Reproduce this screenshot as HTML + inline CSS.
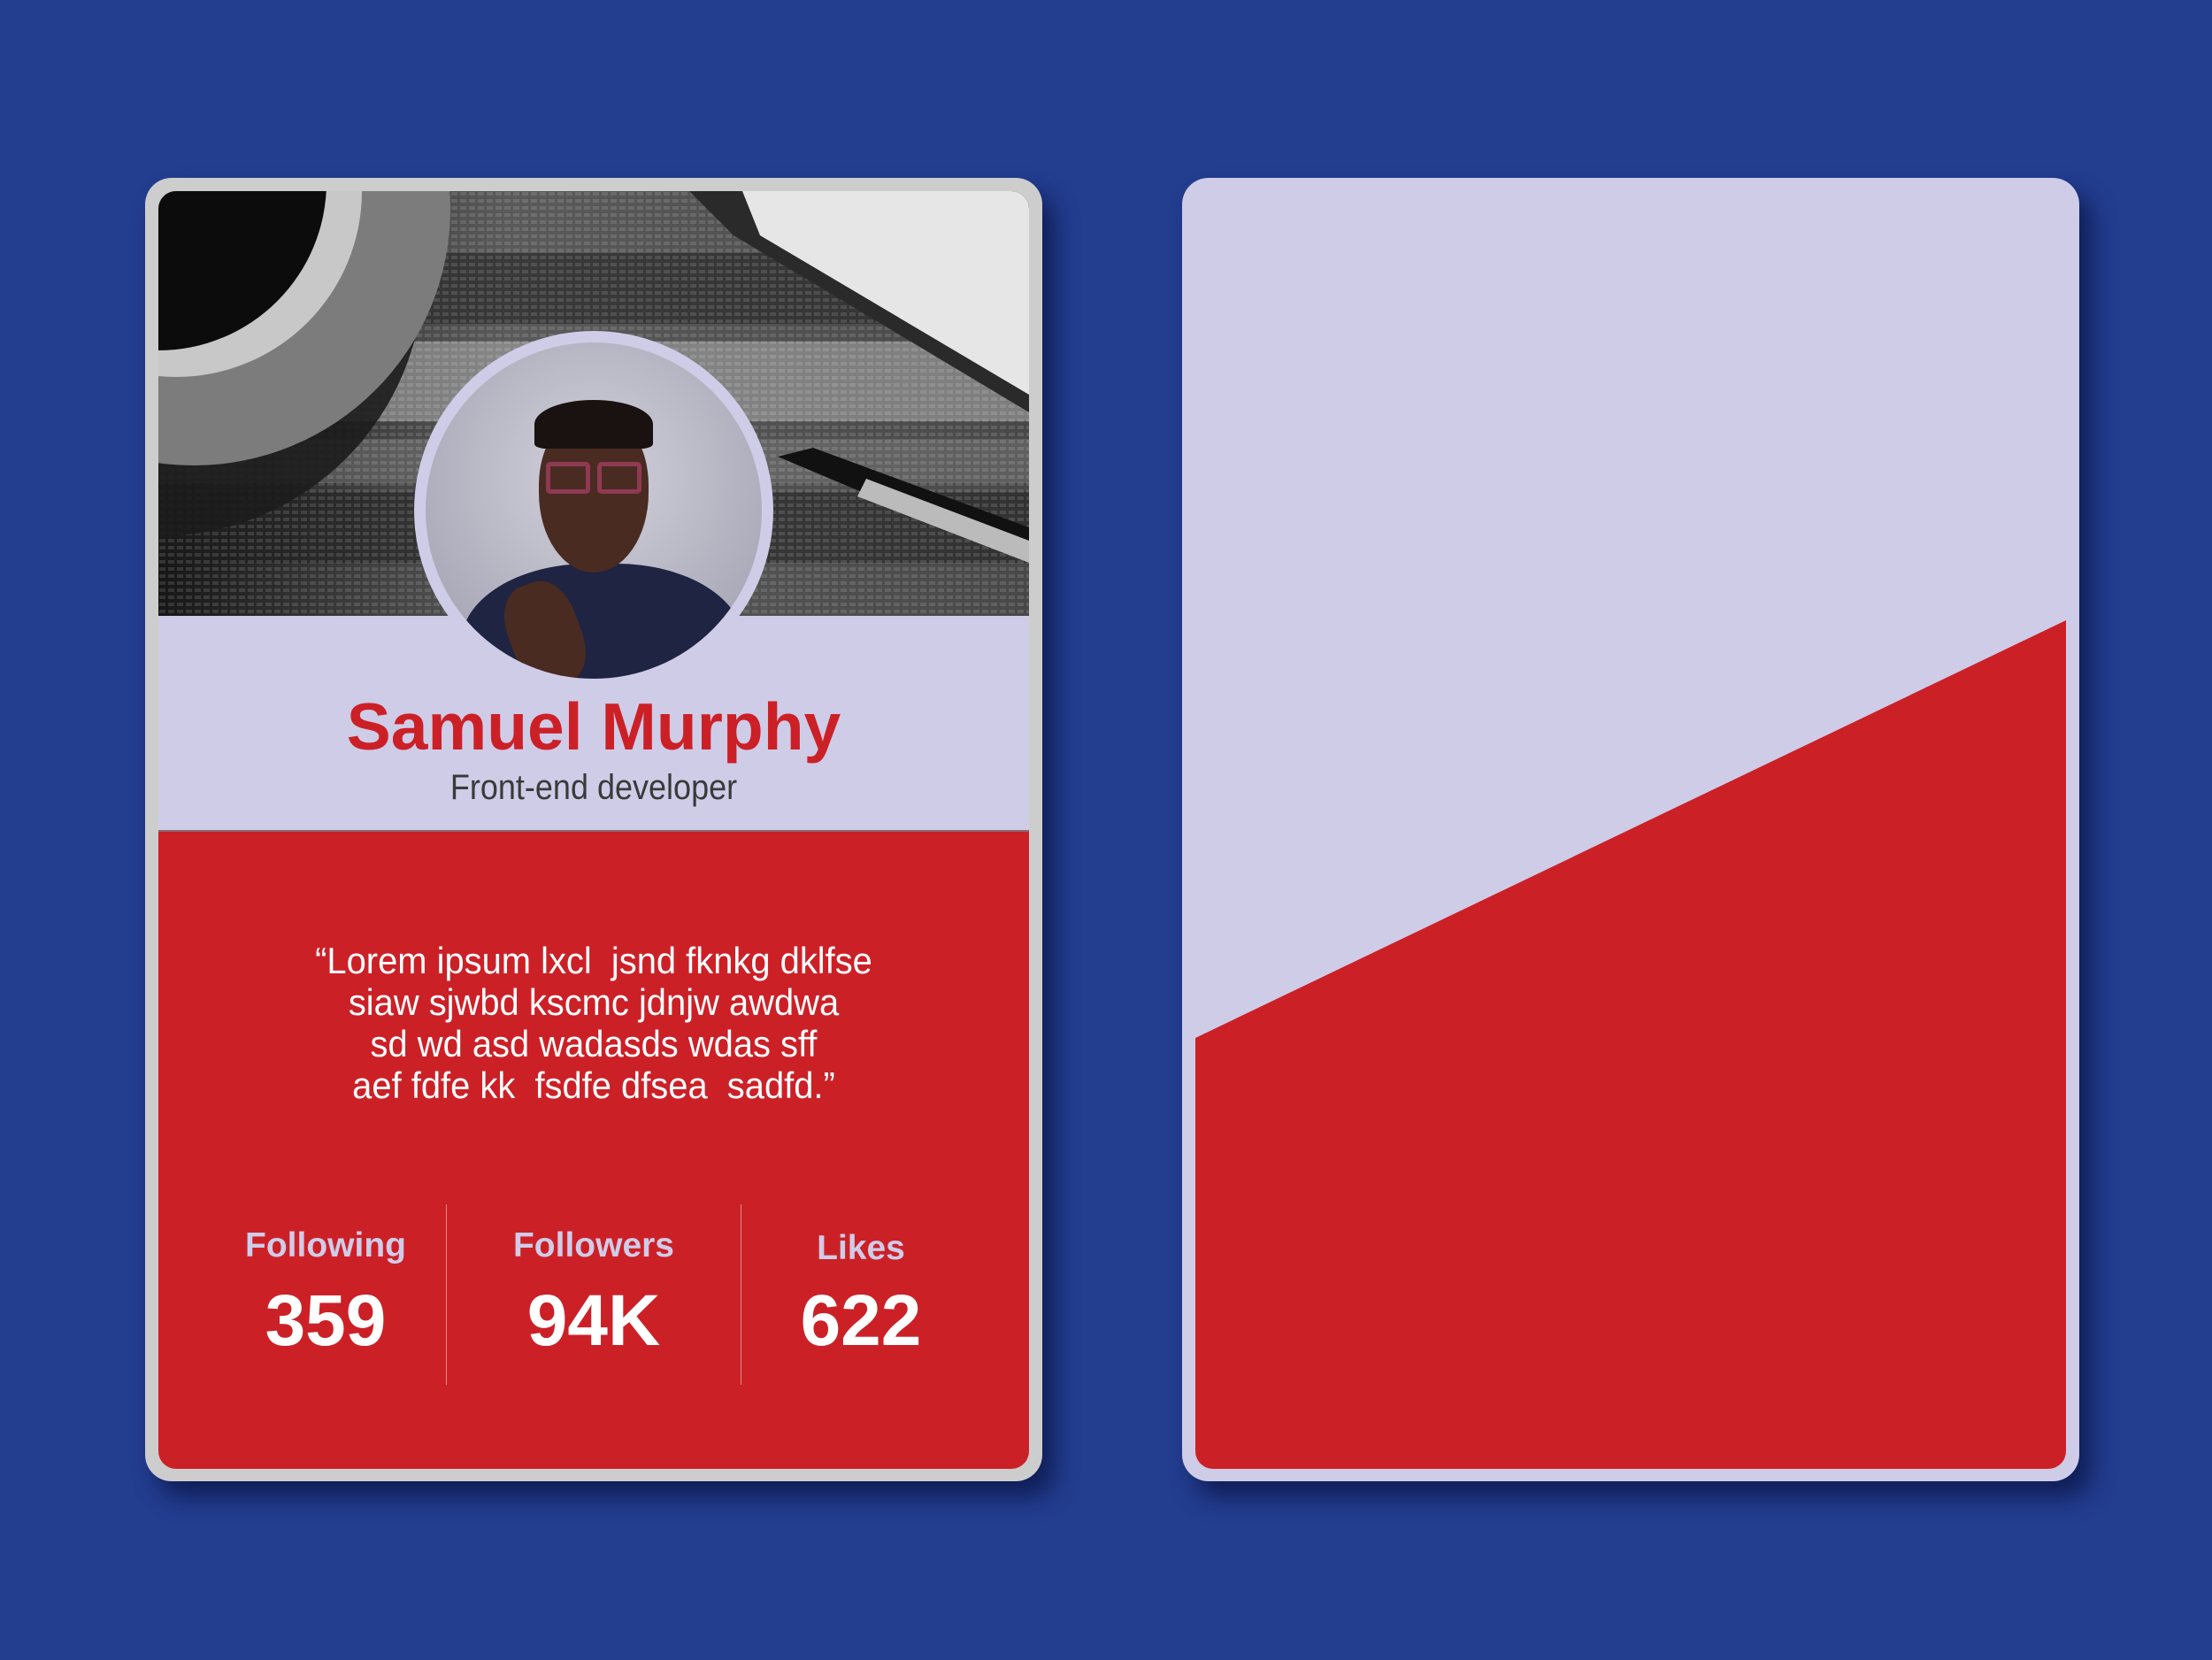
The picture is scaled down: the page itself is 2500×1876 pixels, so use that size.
<!DOCTYPE html>
<html><head><meta charset="utf-8"><style>
*{margin:0;padding:0;box-sizing:border-box}
body{width:2500px;height:1876px;background:#233d8f;position:relative;overflow:hidden;font-family:"Liberation Sans",sans-serif}
.card{position:absolute;top:201px;width:1014px;height:1473px;border-radius:30px;box-shadow:14px 18px 26px rgba(10,20,70,.75)}
#c1{left:164px;background:#cdcdcd}
#c2{left:1336px;background:#cfcce8}
.in{position:absolute;left:15px;top:15px;width:984px;height:1444px;border-radius:20px;overflow:hidden;background:#cfcce8}
.t{position:absolute;left:0;width:100%;text-align:center;white-space:nowrap}
</style></head><body>
<div class="card" id="c1"><div class="in">
<svg width="984" height="480" style="position:absolute;left:0;top:0">
<defs>
<pattern id="w" width="10" height="8" patternUnits="userSpaceOnUse"><rect width="10" height="8" fill="#000" opacity=".15"/><rect x="1" y="1" width="7" height="4" fill="#fff" opacity=".12"/></pattern>
<linearGradient id="bg" x1="0" y1="0" x2="1" y2="0"><stop offset="0" stop-color="#1a1a1a"/><stop offset=".4" stop-color="#6a6a6a"/><stop offset="1" stop-color="#555"/></linearGradient>
</defs>
<rect width="984" height="480" fill="url(#bg)"/>
<rect y="70" width="984" height="80" fill="#333" opacity=".7"/>
<rect y="170" width="984" height="90" fill="#c8c8c8" opacity=".55"/>
<rect y="280" width="984" height="50" fill="#999" opacity=".4"/>
<rect y="340" width="984" height="80" fill="#222" opacity=".5"/>
<rect width="984" height="480" fill="url(#w)"/>
<circle cx="0" cy="90" r="300" fill="#1c1c1c" opacity=".9"/>
<circle cx="40" cy="20" r="290" fill="#7c7c7c"/>
<circle cx="20" cy="0" r="210" fill="#c8c8c8"/>
<circle cx="0" cy="-10" r="190" fill="#0c0c0c"/>
<polygon points="600,0 984,0 984,250 650,50" fill="#2a2a2a"/>
<polygon points="660,0 984,0 984,230 680,50" fill="#e6e6e6"/>
<polygon points="700,300 740,290 984,380 984,420" fill="#111"/>
<polygon points="800,325 984,395 984,420 790,345" fill="#bbb"/>
</svg>
<div style="position:absolute;left:289px;top:158px;width:406px;height:406px;border-radius:50%;background:#cfcce8"></div>
<div style="position:absolute;left:302px;top:171px;width:380px;height:380px;border-radius:50%;overflow:hidden;background:radial-gradient(circle at 50% 40%,#d2d1dc,#9c9bab)">
<div style="position:absolute;left:40px;top:250px;width:320px;height:200px;border-radius:45% 45% 0 0;background:#1e2442"></div>
<div style="position:absolute;left:128px;top:80px;width:124px;height:180px;border-radius:45% 45% 50% 50%;background:#4a2b22"></div>
<div style="position:absolute;left:123px;top:65px;width:134px;height:55px;border-radius:50% 50% 10% 10%;background:#1a1210"></div>
<div style="position:absolute;left:136px;top:135px;width:50px;height:36px;border:5px solid #8e3a52;border-radius:5px"></div>
<div style="position:absolute;left:194px;top:135px;width:50px;height:36px;border:5px solid #8e3a52;border-radius:5px"></div>
<div style="position:absolute;left:95px;top:270px;width:80px;height:120px;border-radius:40%;background:#4a2b22;transform:rotate(-20deg)"></div>
</div>
<div class="t" style="top:562px;font-size:75px;font-weight:bold;color:#cc2027">Samuel Murphy</div>
<div class="t" style="top:652px;font-size:40px;color:#3a3a3a;transform:scaleX(.9)">Front-end developer</div>
<div style="position:absolute;left:0;top:722px;width:984px;height:722px;background:#cc2027;border-top:2px solid #8a6a70"></div>
<div class="t" style="top:846px;font-size:42px;line-height:47px;color:#fff;transform:scaleX(.95)">“Lorem ipsum lxcl&nbsp; jsnd fknkg dklfse<br>siaw sjwbd kscmc jdnjw awdwa<br>sd wd asd wadasds wdas sff<br>aef fdfe kk&nbsp; fsdfe dfsea&nbsp; sadfd.”</div>
<div style="position:absolute;left:325px;top:1145px;width:1px;height:204px;background:#e08a8a"></div>
<div style="position:absolute;left:658px;top:1145px;width:1px;height:204px;background:#e08a8a"></div>
<div style="position:absolute;left:44px;width:290px;top:1170px;text-align:center;color:#cfcce8;font-size:39px;font-weight:bold">Following</div>
<div style="position:absolute;left:347px;width:290px;top:1170px;text-align:center;color:#cfcce8;font-size:39px;font-weight:bold">Followers</div>
<div style="position:absolute;left:649px;width:290px;top:1173px;text-align:center;color:#cfcce8;font-size:39px;font-weight:bold">Likes</div>
<div style="position:absolute;left:44px;width:290px;top:1230px;text-align:center;color:#fff;font-size:82px;font-weight:bold">359</div>
<div style="position:absolute;left:347px;width:290px;top:1230px;text-align:center;color:#fff;font-size:82px;font-weight:bold">94K</div>
<div style="position:absolute;left:649px;width:290px;top:1230px;text-align:center;color:#fff;font-size:82px;font-weight:bold">622</div>
</div></div>
<div class="card" id="c2"><div class="in">
<svg width="984" height="1444" style="position:absolute;left:0;top:0"><polygon points="0,957 984,485 984,1444 0,1444" fill="#cc2027"/></svg>
</div></div>
</body></html>
